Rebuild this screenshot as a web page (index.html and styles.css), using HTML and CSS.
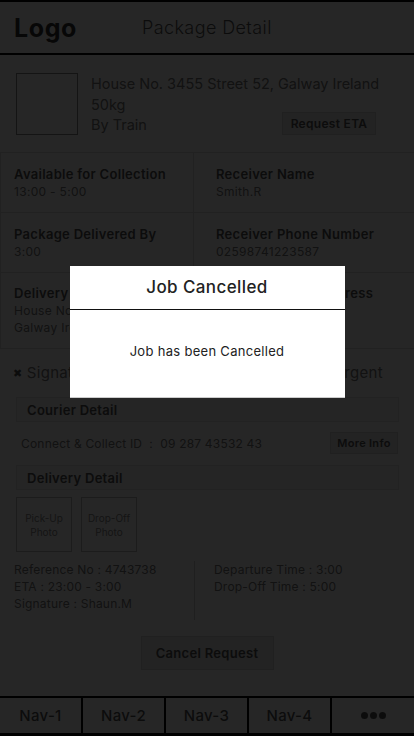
FILE: index.html
```html
<!DOCTYPE html>
<html lang="en">
<head>
<meta charset="utf-8">
<title>Package Detail</title>
<link rel="stylesheet" href="styles.css">
</head>
<body>
<div class="app">
  <header class="topbar">
    <div class="logo">Logo</div>
    <div class="page-title">Package Detail</div>
  </header>

  <section class="summary">
    <div class="thumb"></div>
    <div class="summary-text">
      <div>House No. 3455 Street 52, Galway Ireland</div>
      <div>50kg</div>
      <div class="summary-last">
        <span>By Train</span>
        <button class="btn btn-eta">Request ETA</button>
      </div>
    </div>
  </section>

  <section class="info-grid">
    <div class="cell cell-left">
      <div class="label">Available for Collection</div>
      <div class="value">13:00 - 5:00</div>
    </div>
    <div class="cell cell-right">
      <div class="label">Receiver Name</div>
      <div class="value">Smith.R</div>
    </div>
    <div class="cell cell-left">
      <div class="label">Package Delivered By</div>
      <div class="value">3:00</div>
    </div>
    <div class="cell cell-right">
      <div class="label">Receiver Phone Number</div>
      <div class="value">02598741223587</div>
    </div>
    <div class="cell cell-left cell-tall">
      <div class="label">Delivery Address</div>
      <div class="value">House No. 3455 Street 52,</div>
      <div class="value">Galway Ireland</div>
    </div>
    <div class="cell cell-right cell-tall">
      <div class="label">Receiver Home Address</div>
      <div class="value">House No. 12,</div>
      <div class="value">Dublin</div>
    </div>
  </section>

  <section class="flags">
    <div class="flag"><span class="x">✖</span> Signature Required</div>
    <div class="flag flag-right"><span class="x">✖</span> Urgent</div>
  </section>

  <div class="section-head">Courier Detail</div>
  <div class="courier-row">
    <span>Connect &amp; Collect ID&nbsp; :&nbsp; 09 287 43532 43</span>
    <button class="btn btn-more">More Info</button>
  </div>

  <div class="section-head">Delivery Detail</div>
  <div class="photos">
    <div class="photo">Pick-Up<br>Photo</div>
    <div class="photo">Drop-Off<br>Photo</div>
  </div>
  <div class="refs">
    <div class="refs-col">
      <div>Reference No : 4743738</div>
      <div>ETA : 23:00 - 3:00</div>
      <div>Signature : Shaun.M</div>
    </div>
    <div class="refs-col refs-right">
      <div>Departure Time : 3:00</div>
      <div>Drop-Off Time : 5:00</div>
    </div>
  </div>

  <div class="cancel-wrap">
    <button class="btn btn-cancel">Cancel Request</button>
  </div>

  <nav class="navbar">
    <div class="nav-item">Nav-1</div>
    <div class="nav-item">Nav-2</div>
    <div class="nav-item">Nav-3</div>
    <div class="nav-item">Nav-4</div>
    <div class="nav-item nav-more"><span class="dot"></span><span class="dot"></span><span class="dot"></span></div>
  </nav>
</div>

<div class="overlay">
  <div class="modal">
    <div class="modal-head">Job Cancelled</div>
    <div class="modal-body">Job has been Cancelled</div>
  </div>
</div>
</body>
</html>
```

FILE: styles.css
```css
* { box-sizing: border-box; }

html, body {
  margin: 0;
  padding: 0;
  background: #fff;
}

body {
  font-family: Inter, "Noto Sans", sans-serif;
  color: #777;
  letter-spacing: 0.3px;
  width: 414px;
  height: 736px;
  overflow: hidden;
}

.app {
  width: 414px;
  height: 736px;
  display: flex;
  flex-direction: column;
}

.topbar {
  height: 55px;
  border-top: 2px solid #000;
  border-bottom: 2px solid #000;
  display: flex;
  align-items: center;
  flex-shrink: 0;
}

.logo {
  font-size: 25px;
  font-weight: 700;
  color: #333;
  padding-left: 14px;
  width: 142px;
  letter-spacing: 0.6px;
}

.page-title {
  font-size: 18px;
  font-weight: 300;
  color: #555;
  letter-spacing: 0.4px;
}

.summary {
  display: flex;
  padding: 18px 16px 17px 16px;
  gap: 13px;
  height: 97px;
}

.thumb {
  width: 62px;
  height: 62px;
  border: 1px solid #888;
  flex-shrink: 0;
}

.summary-text {
  flex: 1;
  font-size: 14.5px;
  line-height: 20.5px;
  color: #777;
  margin-top: 1px;
  letter-spacing: 0;
  white-space: nowrap;
}

.summary-last {
  display: flex;
  justify-content: space-between;
  align-items: center;
  height: 20.5px;
  padding-right: 22px;
}

.btn {
  font-family: inherit;
  background: #e8e8e8;
  border: 1px solid #d6d6d6;
  color: #555;
  font-weight: 600;
  padding: 0;
  letter-spacing: 0.3px;
  cursor: pointer;
}

.btn-eta {
  width: 94px;
  height: 23px;
  font-size: 12px;
  flex-shrink: 0;
  margin-top: -3px;
}

.info-grid {
  display: grid;
  grid-template-columns: 193px 221px;
  border-top: 1px solid #ddd;
}

.cell {
  border-left: 1px solid #ddd;
  border-bottom: 1px solid #ddd;
  padding: 12px 10px 11px 13px;
  height: 60px;
  line-height: 18px;
  white-space: nowrap;
}

.cell-right {
  padding-left: 22px;
}

.cell-tall {
  height: 76px;
  line-height: 17px;
}

.label {
  font-size: 13px;
  font-weight: 600;
  color: #555;
}

.value {
  font-size: 12px;
  color: #777;
}

.flags {
  display: flex;
  height: 48px;
  align-items: center;
  font-size: 15px;
  color: #777;
  padding: 0 13px 1px;
}

.flag {
  width: 306px;
}

.x {
  font-size: 11px;
  color: #555;
  position: relative;
  top: -1px;
}

.flag-right {
  width: auto;
}

.section-head {
  margin: 0 15px 0 16px;
  height: 25px;
  background: #f4f4f4;
  border: 1px solid #e4e4e4;
  font-size: 13px;
  font-weight: 600;
  color: #555;
  padding-left: 10px;
  display: flex;
  align-items: center;
}

.courier-row {
  display: flex;
  align-items: center;
  justify-content: space-between;
  height: 43px;
  padding: 0 16px 0 21px;
  font-size: 12px;
  letter-spacing: 0.2px;
  color: #777;
}

.btn-more {
  width: 68px;
  height: 22px;
  font-size: 11px;
  margin-top: -2px;
}

.photos {
  display: flex;
  gap: 9px;
  padding: 7px 0 0 16px;
}

.photo {
  width: 56px;
  height: 55px;
  border: 1px solid #bbb;
  font-size: 10px;
  line-height: 14px;
  color: #888;
  text-align: center;
  display: flex;
  align-items: center;
  justify-content: center;
  letter-spacing: 0;
}

.refs {
  display: flex;
  padding: 9px 0 0 14px;
  font-size: 12px;
  letter-spacing: 0.2px;
  line-height: 17px;
  color: #777;
}

.refs-col {
  width: 180px;
  padding-bottom: 8px;
}

.refs-right {
  border-left: 1px solid #ccc;
  padding-left: 19px;
  width: auto;
}

.cancel-wrap {
  display: flex;
  justify-content: center;
  padding-top: 16px;
}

.btn-cancel {
  width: 133px;
  height: 34px;
  font-size: 13px;
}

.navbar {
  margin-top: auto;
  display: flex;
  height: 40px;
  border-top: 2px solid #000;
  border-bottom: 3px solid #000;
}

.nav-item {
  flex: 0 0 83px;
  display: flex;
  align-items: center;
  justify-content: center;
  font-size: 15px;
  font-weight: 500;
  color: #555;
  border-right: 2px solid #000;
}

.nav-more {
  flex: 1;
  border-right: none;
  gap: 2px;
}

.dot {
  width: 7px;
  height: 7px;
  border-radius: 50%;
  background: #555;
}

.overlay {
  position: fixed;
  inset: 0;
  background: rgba(0, 0, 0, 0.85);
  display: flex;
  justify-content: center;
  align-items: flex-start;
  padding-top: 266px;
}

.modal {
  width: 275px;
  background: #fff;
  border-bottom: 1px solid #ccc;
}

.modal-head {
  height: 44px;
  border-bottom: 1.5px solid #111;
  display: flex;
  align-items: center;
  justify-content: center;
  font-size: 17px;
  font-weight: 500;
  color: #222;
  padding-bottom: 1px;
  letter-spacing: 0.4px;
}

.modal-body {
  height: 87px;
  display: flex;
  align-items: center;
  justify-content: center;
  font-size: 13px;
  color: #222;
  padding-bottom: 6px;
}
```
